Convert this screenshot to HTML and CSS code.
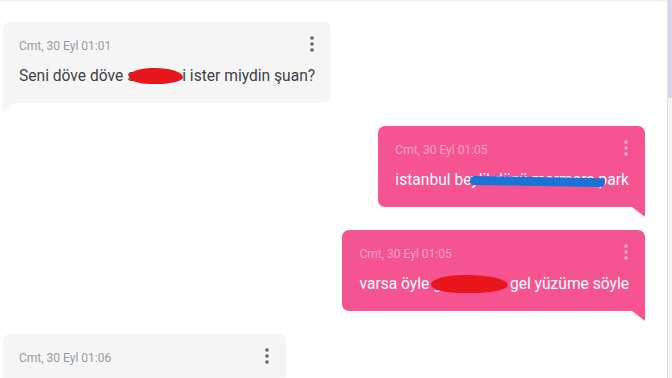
FILE: index.html
```html
<!DOCTYPE html>
<html lang="tr">
<head>
	<meta charset="UTF-8">
	<title>mesajlar</title>
	<link rel="stylesheet" href="styles.css">
</head>
<body>
	<div id="page">
		<section id="chat">
			<div class="msg msg-in">
				<div class="msg-head">
					<span class="time">Cmt, 30 Eyl 01:01</span>
					<svg class="dots" width="4" height="16" viewBox="0 0 4 16"><circle cx="2" cy="2" r="1.8"/><circle cx="2" cy="8" r="1.8"/><circle cx="2" cy="14" r="1.8"/></svg>
				</div>
				<p class="msg-text">Seni döve döve s<span class="blob blob-1"></span>i ister miydin şuan?</p>
			</div>
			<div class="msg msg-out">
				<div class="msg-head">
					<span class="time">Cmt, 30 Eyl 01:05</span>
					<svg class="dots" width="4" height="16" viewBox="0 0 4 16"><circle cx="2" cy="2" r="1.8"/><circle cx="2" cy="8" r="1.8"/><circle cx="2" cy="14" r="1.8"/></svg>
				</div>
				<p class="msg-text">istanbul be<span class="scribble">ylikdüzü marmara p</span>ark</p>
			</div>
			<div class="msg msg-out">
				<div class="msg-head">
					<span class="time">Cmt, 30 Eyl 01:05</span>
					<svg class="dots" width="4" height="16" viewBox="0 0 4 16"><circle cx="2" cy="2" r="1.8"/><circle cx="2" cy="8" r="1.8"/><circle cx="2" cy="14" r="1.8"/></svg>
				</div>
				<p class="msg-text">varsa öyle g<span class="blob blob-2"></span>gel yüzüme söyle</p>
			</div>
			<div class="msg msg-in msg-wide">
				<div class="msg-head">
					<span class="time">Cmt, 30 Eyl 01:06</span>
					<svg class="dots" width="4" height="16" viewBox="0 0 4 16"><circle cx="2" cy="2" r="1.8"/><circle cx="2" cy="8" r="1.8"/><circle cx="2" cy="14" r="1.8"/></svg>
				</div>
			</div>
		</section>
		<div id="scrollbar"><div class="thumb"></div></div>
	</div>
</body>
</html>
```

FILE: styles.css
```css
* {margin: 0; padding: 0; box-sizing: border-box;}
html, body {height: 100%; overflow: hidden;}
body {background: #fff; font-family: Roboto, "Liberation Sans", sans-serif;}

#page {display: flex; height: 378px;}
#chat {flex: 1; display: flex; flex-direction: column; gap: 23px; padding: 20px 22px 0 3px; border-top: 2px solid #f2f2f2;}

/* balon */
.msg {position: relative; padding: 16px 16px 17px 16px; border-radius: 7px;}
.msg-head {display: flex; justify-content: space-between; align-items: center; height: 16px; padding-right: 1px;}
.msg-text {margin-top: 12px; font-size: 15.6px; line-height: 20px; white-space: nowrap;}
.time {font-size: 12px; line-height: 16px;}
.dots {display: block; margin-top: -4px;}

.msg-in {align-self: flex-start; background: #f5f5f5; border-bottom-left-radius: 0;}
.msg-in .time {color: #969ba1;}
.msg-in .msg-text {color: #3e4246;}
.msg-in .dots {fill: #5f6368;}
.msg-in::after {content: ""; position: absolute; left: 0; top: 100%; border-top: 10px solid #f5f5f5; border-right: 11px solid transparent;}
.msg-wide {width: 283px; height: 60px;}

.msg-out {align-self: flex-end; background: #f65391; border-bottom-right-radius: 0; padding-left: 17px;}
.msg-out .time {color: #fba6c6;}
.msg-out .msg-text {color: #fff;}
.msg-out .dots {fill: #fbb0cc;}
.msg-out::after {content: ""; position: absolute; right: 0; top: 100%; border-top: 10px solid #f65391; border-left: 13px solid transparent;}

/* karalama */
.blob {display: inline-block; vertical-align: middle; position: relative; top: -1px; height: 16px; background: #e8151b; border-radius: 45% 55% 50% 40% / 55% 60% 45% 50%;}
.blob-1 {width: 54px; margin-left: -6px; margin-right: -1px;}
.blob-2 {width: 77px; height: 18px; margin-left: -11px; margin-right: 2px;}
.scribble {position: relative;}
.scribble::after {content: ""; position: absolute; left: -1px; right: 2px; top: 6px; height: 9px; background: #1a74d6; border-radius: 5px 3px 5px 4px; transform: rotate(1deg);}

#scrollbar {width: 5px; border-left: 1px solid #e2e2e2; background: #f4f4f4;}
#scrollbar .thumb {height: 98px; background: #d9d4ea;}
```
